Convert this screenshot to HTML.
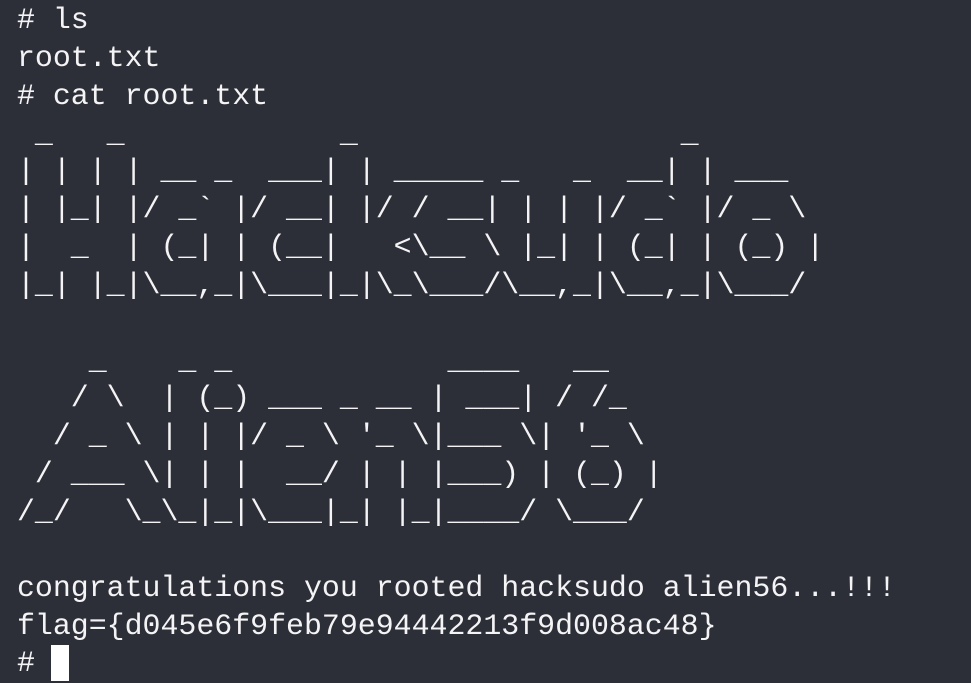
<!DOCTYPE html>
<html><head><meta charset="utf-8"><style>
html,body{margin:0;padding:0;background:#2d2f38;width:971px;height:683px;overflow:hidden;}
pre{margin:0;position:absolute;left:17px;top:2px;font-family:"Liberation Mono",monospace;font-size:29.9px;line-height:37.85px;color:#f4f4f6;white-space:pre;}
.cur{position:absolute;left:51px;top:645px;width:18px;height:36px;background:#fff;}
</style></head><body>
<pre># ls
root.txt
# cat root.txt
 _   _            _                  _
| | | | __ _  ___| | _____ _   _  __| | ___
| |_| |/ _` |/ __| |/ / __| | | |/ _` |/ _ \
|  _  | (_| | (__|   &lt;\__ \ |_| | (_| | (_) |
|_| |_|\__,_|\___|_|\_\___/\__,_|\__,_|\___/

    _    _ _            ____   __
   / \  | (_) ___ _ __ | ___| / /_
  / _ \ | | |/ _ \ '_ \|___ \| '_ \
 / ___ \| | |  __/ | | |___) | (_) |
/_/   \_\_|_|\___|_| |_|____/ \___/

congratulations you rooted hacksudo alien56...!!!
flag={d045e6f9feb79e94442213f9d008ac48}
# </pre>
<div class="cur"></div>
</body></html>
